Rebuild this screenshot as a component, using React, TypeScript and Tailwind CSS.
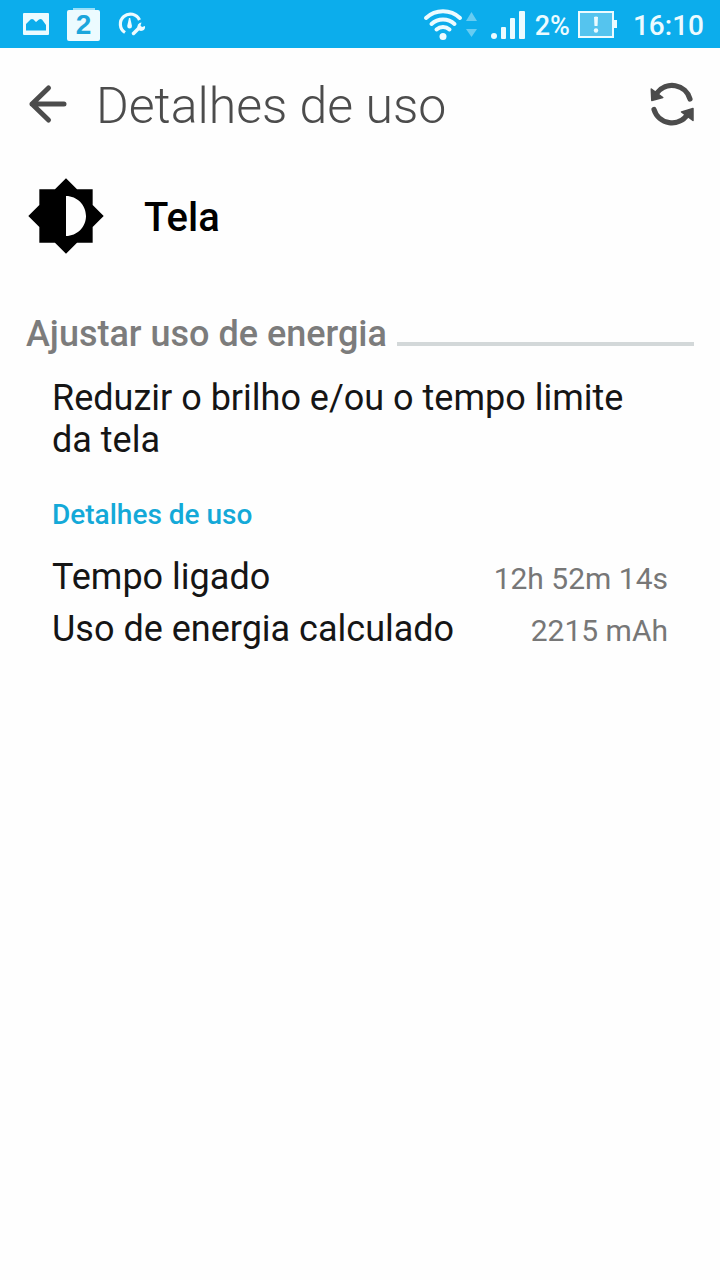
import React from "react";

function StatusBar() {
  return (
    <div className="flex h-12 items-center justify-between bg-[#0cadec] pr-4 pl-[23px] text-[#ecfbff]">
      <div className="flex items-center gap-[18px]">
        <svg className="h-[22px] w-[26px]" viewBox="0 0 26 22" role="img" aria-label="Imagem">
          <path
            fillRule="evenodd"
            fill="currentColor"
            d="M1 0h24q1 0 1 1v20q0 1-1 1H1q-1 0-1-1V1q0-1 1-1zM3 17.500h20V12l-4-5.500q-1.500-1-3 0L13 9 10.500 6.500q-1.500-1-3 0L3 11z"
          />
        </svg>
        <div className="flex flex-col items-center">
          <div className="h-[2px] w-[22px] bg-[#9adff8]" />
          <div className="flex h-[31px] w-[33px] items-center justify-center rounded-xs bg-current">
            <span className="font-['Liberation_Sans',sans-serif] text-[28px] leading-none font-bold text-[#1ba6dc]">2</span>
          </div>
        </div>
        <svg className="h-[26px] w-7" viewBox="0 0 28 26" fill="none" role="img" aria-label="Otimizador">
          <path d="M7 21.500A10 10 0 1 1 21.500 9" stroke="currentColor" strokeWidth="3.200" />
          <path d="M11 7h1.200l1.800 8q0 2.500-2.400 2.500t-2.400-2.500z" fill="currentColor" />
          <path d="M15.500 22.500l6-6" stroke="currentColor" strokeWidth="3.500" strokeLinecap="round" />
          <path
            d="M23.500 11.500l-1 3 1.500 1.500 3-1q.5 3-2 4.500-3 1.300-5-1-1.500-2.500 0-5 1.500-2 3.500-2z"
            fill="currentColor"
          />
        </svg>
      </div>
      <div className="flex items-center">
        <svg className="h-8 w-[54px]" viewBox="0 0 54 32" fill="none" role="img" aria-label="Wi-Fi">
          <g stroke="currentColor" strokeWidth="4" strokeLinecap="round">
            <path d="M3 10a25 25 0 0 1 34 0" />
            <path d="M8.500 16a17 17 0 0 1 23 0" />
            <path d="M13.500 21.500a10 10 0 0 1 13 0" />
          </g>
          <circle cx="20" cy="28.500" r="3.500" fill="currentColor" />
          <path d="M43 13l5.500-9 5.500 9zM43 21h11l-5.500 8z" fill="#67ccf2" />
        </svg>
        <svg className="ml-3.5 h-[30px] w-[34px]" viewBox="0 0 34 30" fill="currentColor" role="img" aria-label="Sinal">
          <circle cx="3" cy="27" r="3" />
          <rect x="10" y="18" width="5" height="12" rx="1" />
          <rect x="19" y="9" width="5" height="21" rx="1" />
          <rect x="28" y="2" width="6" height="28" rx="1" />
        </svg>
        <span className="ml-2.5 pt-1 text-[27px] leading-8 font-medium">2%</span>
        <svg className="ml-2 h-[27px] w-[39px]" viewBox="0 0 39 27" role="img" aria-label="Bateria fraca">
          <rect x="1" y="1" width="34" height="25" fill="#55c4ee" stroke="currentColor" strokeWidth="2" />
          <rect x="36" y="9" width="3" height="8" fill="currentColor" />
          <path d="M16 6q2-1 4 0l-.5 9h-3z" fill="currentColor" />
          <circle cx="18" cy="19.500" r="2.200" fill="currentColor" />
        </svg>
        <span className="ml-4 pt-1 text-[28px] leading-8 font-medium">16:10</span>
      </div>
    </div>
  );
}

function Header() {
  return (
    <header className="flex h-28 items-center pr-[25px] pl-7 text-[#4c4c4c]">
      <button type="button" aria-label="Voltar" className="shrink-0">
        <svg className="h-10 w-10" viewBox="0 0 40 40" fill="none">
          <path
            d="M20.500 4L4 20l16.500 16M4 20h32"
            stroke="currentColor"
            strokeWidth="5"
            strokeLinecap="round"
            strokeLinejoin="round"
          />
        </svg>
      </button>
      <h1 className="ml-7 grow pt-1 text-[50px] leading-14 font-light">Detalhes de uso</h1>
      <button type="button" aria-label="Atualizar" className="shrink-0">
        <svg className="h-[46px] w-[46px]" viewBox="0 0 46 46" fill="none">
          <g stroke="currentColor" strokeWidth="5.200" strokeLinecap="round">
            <path d="M8 12A18.700 18.700 0 0 1 41 18" />
            <path d="M38.500 33.500A18.700 18.700 0 0 1 5 28.500" />
          </g>
          <g fill="currentColor" stroke="currentColor" strokeWidth="1.500" strokeLinejoin="round">
            <path d="M2.300 8l.5 11.500 11-3z" />
            <path d="M44 27.500v12l-11.500-8.500z" />
          </g>
        </svg>
      </button>
    </header>
  );
}

const usage = [
  { label: "Tempo ligado", value: "12h 52m 14s" },
  { label: "Uso de energia calculado", value: "2215 mAh" },
];

export default function App() {
  return (
    <div className="min-h-screen bg-[#fefefe] font-[Roboto,sans-serif] text-[#151515]">
      <StatusBar />
      <Header />
      <main>
        <div className="flex items-center px-[26px] pt-4 text-black">
          <svg className="h-20 w-20" viewBox="0 0 24 24" fill="currentColor" aria-hidden="true">
            <path d="M20 15.310L23.310 12 20 8.690V4h-4.690L12 .69 8.690 4H4v4.690L.69 12 4 15.310V20h4.690L12 23.310 15.310 20H20v-4.690zM12 18V6c3.310 0 6 2.690 6 6s-2.690 6-6 6z" />
          </svg>
          <h2 className="ml-[38px] pt-1 text-[40px] leading-12 font-medium">Tela</h2>
        </div>
        <div className="mt-[57px] flex items-end gap-2.5 px-[26px]">
          <h3 className="text-[36px] leading-[42px] font-medium text-[#7c7c7c]">Ajustar uso de energia</h3>
          <div className="mb-[9px] h-1 grow bg-[#d3d8d9]" />
        </div>
        <section className="px-[52px] pt-[22px]">
          <p className="text-[36px] leading-[42px]">Reduzir o brilho e/ou o tempo limite da tela</p>
          <h3 className="mt-[38px] text-[28px] leading-8 font-medium text-[#14a9d8]">Detalhes de uso</h3>
          <dl className="mt-5 text-[36px] leading-[52px]">
            {usage.map((row) => (
              <div key={row.label} className="flex items-baseline justify-between">
                <dt>{row.label}</dt>
                <dd className="text-[30px] leading-9 text-[#777777]">{row.value}</dd>
              </div>
            ))}
          </dl>
        </section>
      </main>
    </div>
  );
}
